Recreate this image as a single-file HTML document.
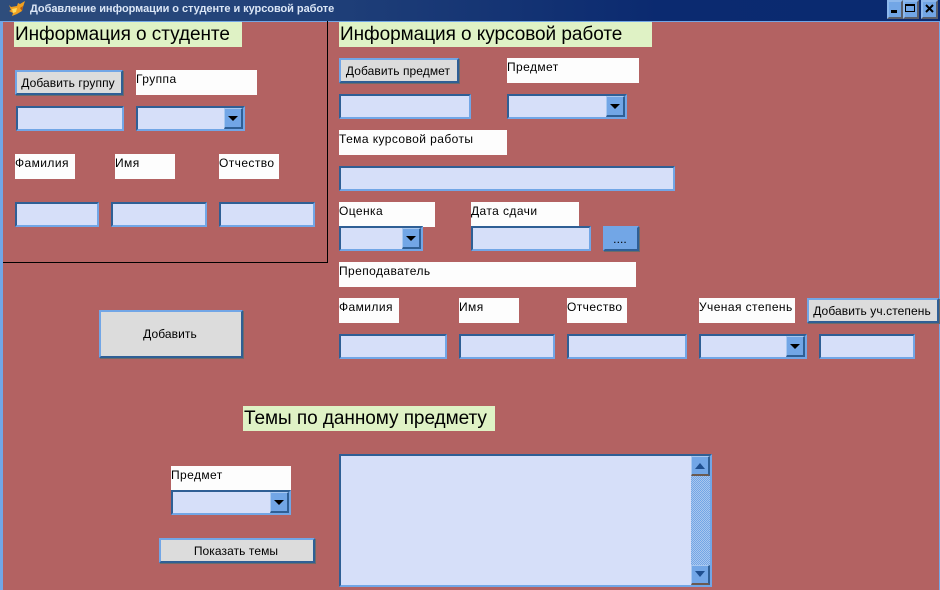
<!DOCTYPE html>
<html><head><meta charset="utf-8">
<style>
html,body{margin:0;padding:0}
body{width:940px;height:590px;overflow:hidden;position:relative;background:#b36262;font-family:"Liberation Sans","DejaVu Sans",sans-serif;font-size:12px;color:#000}
div{position:absolute;box-sizing:border-box;white-space:nowrap}
.h{background:#dff2c5;font-size:19px;height:25px;line-height:26px;padding-left:1px;letter-spacing:-.05px}
.l{background:#fdfdfd;height:25px;line-height:18px;letter-spacing:.42px}
.b{background:#dcdcdc;height:25px;text-align:center;line-height:22px;border:2px solid;border-color:#72a6e6 #2f5f95 #2f5f95 #72a6e6;box-shadow:1px 1px 0 #6b6b6b;letter-spacing:.08px;padding-right:2px}
.i{background:#d6dff9;height:25px;border:2px solid;border-color:#2f5f95 #72a6e6 #72a6e6 #2f5f95}
.a{position:absolute;right:0;top:0;width:19px;height:21px;background:#72a6e6;border:solid;border-width:1px 2px 2px 1px;border-color:#a8c8f0 #2f5f95 #2f5f95 #a8c8f0}
.a:after{content:"";position:absolute;left:3px;top:7px;border:5px solid transparent;border-top:5px solid #000;border-bottom:0}
.w{background:#72a6e6;border:2px solid;border-color:#8db8ec #5a5f6c #5a5f6c #8db8ec;top:0;height:19px}
</style></head><body>
<div style="left:0;top:0;width:940px;height:22px;background:linear-gradient(90deg,#2e4d7c 0,#1f3f78 35%,#0b2a70 70%,#0a2a70 100%);border-bottom:1px solid #72a6e6"></div>
<div style="left:0;top:21px;width:3px;height:569px;background:#72a6e6"></div>
<div style="left:939px;top:21px;width:1px;height:569px;background:#72a6e6"></div>
<svg style="position:absolute;left:8px;top:1px" width="18" height="16" viewBox="0 0 18 16"><path d="M17 0L12 3 10 2 9 5 3 6 1 4 3 9 1 10 5 12 4 15 9 13 14 10 15 6Z" fill="#f0a020"/><path d="M4 8L9 7 8 11 5 12Z" fill="#ffdc60"/><path d="M12 7l3-2-1 5z" fill="#b85a10"/></svg>
<div style="left:30px;top:0;height:18px;line-height:18px;color:#dbe6f6;font-size:11px;font-weight:bold;letter-spacing:-.05px">Добавление информации о студенте и курсовой работе</div>
<div class="w" style="left:887px;width:16px"><div style="left:2px;top:8px;width:6px;height:3px;background:#000"></div></div>
<div class="w" style="left:903px;width:16px"><div style="left:0;top:2px;width:10px;height:8px;border:1px solid #000;border-top-width:2px"></div></div>
<div class="w" style="left:921px;width:17px"><svg style="position:absolute;left:2px;top:2px" width="9" height="9" viewBox="0 0 9 9"><path d="M1 1L8 8M8 1L1 8" stroke="#000" stroke-width="2" fill="none"/></svg></div>

<div style="left:327px;top:21px;width:1px;height:242px;background:#000"></div>
<div style="left:3px;top:262px;width:325px;height:1px;background:#000"></div>

<div class="h" style="left:14px;top:22px;width:228px">Информация о студенте</div>
<div class="h" style="left:339px;top:22px;width:313px">Информация о курсовой работе</div>
<div class="h" style="left:243px;top:406px;width:252px">Темы по данному предмету</div>

<div class="b" style="left:15px;top:70px;width:108px">Добавить группу</div>
<div class="l" style="left:136px;top:70px;width:121px">Группа</div>
<div class="i" style="left:16px;top:106px;width:108px"></div>
<div class="i" style="left:136px;top:106px;width:109px"><div class="a"></div></div>
<div class="l" style="left:15px;top:154px;width:60px">Фамилия</div>
<div class="l" style="left:115px;top:154px;width:60px">Имя</div>
<div class="l" style="left:219px;top:154px;width:60px">Отчество</div>
<div class="i" style="left:15px;top:202px;width:84px"></div>
<div class="i" style="left:111px;top:202px;width:96px"></div>
<div class="i" style="left:219px;top:202px;width:96px"></div>
<div class="b" style="left:99px;top:310px;width:144px;height:48px;line-height:44px">Добавить</div>

<div class="b" style="left:339px;top:58px;width:120px">Добавить предмет</div>
<div class="l" style="left:507px;top:58px;width:132px">Предмет</div>
<div class="i" style="left:339px;top:94px;width:132px"></div>
<div class="i" style="left:507px;top:94px;width:120px"><div class="a"></div></div>
<div class="l" style="left:339px;top:130px;width:168px">Тема курсовой работы</div>
<div class="i" style="left:339px;top:166px;width:336px"></div>
<div class="l" style="left:339px;top:202px;width:96px">Оценка</div>
<div class="l" style="left:471px;top:202px;width:108px">Дата сдачи</div>
<div class="i" style="left:339px;top:226px;width:84px"><div class="a"></div></div>
<div class="i" style="left:471px;top:226px;width:120px"></div>
<div class="b" style="left:603px;top:226px;width:36px;background:#72a6e6">....</div>
<div class="l" style="left:339px;top:262px;width:297px">Преподаватель</div>
<div class="l" style="left:339px;top:298px;width:60px">Фамилия</div>
<div class="l" style="left:459px;top:298px;width:60px">Имя</div>
<div class="l" style="left:567px;top:298px;width:60px">Отчество</div>
<div class="l" style="left:699px;top:298px;width:96px">Ученая степень</div>
<div class="b" style="left:807px;top:298px;width:132px">Добавить уч.степень</div>
<div class="i" style="left:339px;top:334px;width:108px"></div>
<div class="i" style="left:459px;top:334px;width:96px"></div>
<div class="i" style="left:567px;top:334px;width:120px"></div>
<div class="i" style="left:699px;top:334px;width:108px"><div class="a"></div></div>
<div class="i" style="left:819px;top:334px;width:96px"></div>

<div class="l" style="left:171px;top:466px;width:120px">Предмет</div>
<div class="i" style="left:171px;top:490px;width:120px"><div class="a"></div></div>
<div class="b" style="left:159px;top:538px;width:156px">Показать темы</div>

<div class="i" style="left:339px;top:454px;width:373px;height:133px">
  <div style="right:0;top:0;width:19px;height:129px;background:repeating-conic-gradient(#72a6e6 0 25%,#a9c6ee 0 50%) 0 0/2px 2px"></div>
  <div style="right:0;top:0;width:19px;height:20px;background:#72a6e6;border:solid;border-width:1px 2px 2px 1px;border-color:#a8c8f0 #2f5f95 #6b5a50 #a8c8f0"><div style="left:3px;top:6px;border:5px solid transparent;border-bottom:6px solid #1f4f8f;border-top:0"></div></div>
  <div style="right:0;top:109px;width:19px;height:20px;background:#72a6e6;border:solid;border-width:1px 2px 2px 1px;border-color:#a8c8f0 #2f5f95 #6b5a50 #a8c8f0"><div style="left:3px;top:5px;border:5px solid transparent;border-top:6px solid #1f4f8f;border-bottom:0"></div></div>
</div>
</body></html>
